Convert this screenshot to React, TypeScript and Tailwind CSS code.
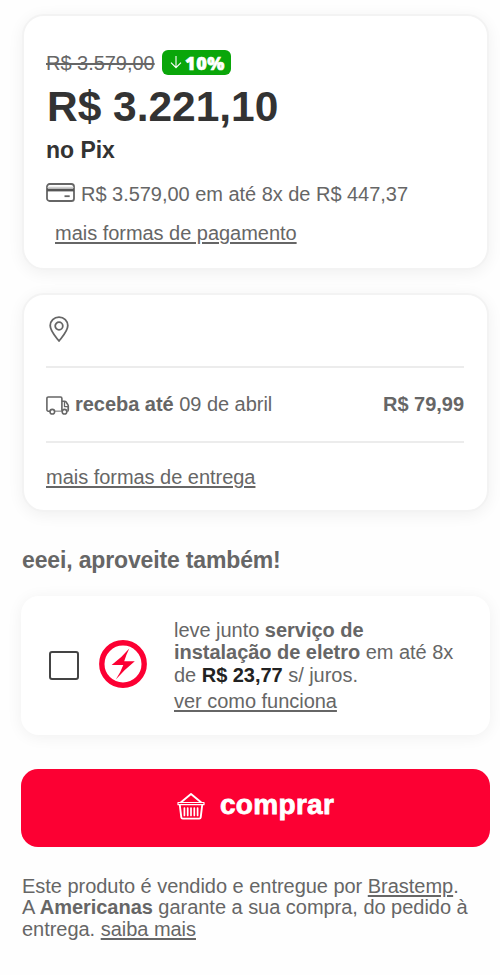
import type { ReactNode } from "react";

function CardIcon() {
  return (
    <svg className="mt-px h-[19px] w-[29px] shrink-0" viewBox="0 0 29 19" fill="none" stroke="#666" strokeWidth="1.8">
      <rect x="1" y="1" width="27" height="17" rx="2.6" />
      <path d="M1 7h27" stroke="#555" strokeWidth="2.8" />
      <path d="M1 4.3h27" stroke="#b5b5b5" strokeWidth="0.8" />
      <path d="M18.5 13.2h5.2" strokeWidth="1.8" />
    </svg>
  );
}

function PinIcon() {
  return (
    <svg className="ml-[3px] h-[27px] w-5" viewBox="0 0 20 27" fill="none" stroke="#666" strokeWidth="1.8" strokeLinejoin="round">
      <path d="M10 1.1C5 1.1 1.2 4.9 1.2 9.6c0 5.6 5 10.6 8.8 15.4 3.8-4.8 8.8-9.8 8.8-15.4C18.8 4.9 15 1.1 10 1.1z" />
      <circle cx="10" cy="10" r="3.8" />
    </svg>
  );
}

function TruckIcon() {
  return (
    <svg className="mt-[4px] h-[19px] w-6 shrink-0" viewBox="0 0 24 19" fill="none" stroke="#666" strokeWidth="1.6" strokeLinejoin="round">
      <path d="M4 15.200H2.300c-.8 0-1.400-.6-1.400-1.400V2.400C.9 1.600 1.500 1 2.300 1h12.200c.8 0 1.400.6 1.400 1.400v12.800" />
      <path d="M8.500 15.200h7.400" stroke="#999" strokeWidth="1.400" />
      <path d="M15.900 5.200h2.800c.5 0 .9.200 1.200.6l2 3c.3.4.4.700.4 1.200v3.800c0 .8-.4 1.400-1.100 1.400" />
      <path d="M18.500 6v4.600h3.800V14" strokeWidth="1.300" />
      <circle cx="6.300" cy="15.700" r="2.300" fill="#fff" />
      <circle cx="18.500" cy="15.700" r="2.300" fill="#fff" />
    </svg>
  );
}

function BoltIcon() {
  return (
    <svg className="h-12 w-12 shrink-0" viewBox="0 0 48 48">
      <circle cx="24" cy="24" r="21.200" fill="none" stroke="#fc0033" strokeWidth="5.400" />
      <path d="M30.300 8.500Q22.500 17.800 12.600 25H24.300Q21.800 32 16.800 39.600 25.500 29.500 35.800 21.300H25.200Q26.800 15.500 30.300 8.500z" fill="#fc0033" />
    </svg>
  );
}

function BasketIcon() {
  return (
    <svg className="h-[28px] w-[28px] shrink-0" viewBox="0 0 28 28" fill="none" stroke="#fff" strokeWidth="1.900" strokeLinejoin="round" strokeLinecap="round">
      <path d="M1 10.500h26v2.200H1z" strokeWidth="1.200" />
      <path d="M4 10.200 14 2l10 8.200" />
      <path d="m2.800 13 1.500 12.300c.1.800.6 1.300 1.400 1.300h16.600c.8 0 1.300-.5 1.400-1.300L25.200 13" />
      <path d="M7.400 16v7.500M10.700 16v7.500M14 16v7.500M17.300 16v7.500M20.600 16v7.500" strokeWidth="1.700" />
    </svg>
  );
}

function Card({ className, children }: { className: string; children: ReactNode }) {
  return (
    <section className={`ml-[22px] w-[467px] rounded-[22px] border-2 border-[#f3f3f3] bg-white px-[22px] shadow-[0_3px_16px_rgba(0,0,0,0.06)] ${className}`}>
      {children}
    </section>
  );
}

const link = "underline decoration-[1.5px] underline-offset-[2px]";

export default function App() {
  return (
    <main className="flex h-[975px] w-[500px] flex-col overflow-hidden bg-[#fefefe] font-['Liberation_Sans',Arial,sans-serif] text-[20px] leading-6 tracking-[-0.03px] whitespace-nowrap text-[#666]">
      <Card className="mt-[14px] h-[256px] pt-[34px]">
        <div className="flex h-[25px]">
          <span className="w-[116px] pt-px line-through decoration-[1.5px]">R$ 3.579,00</span>
          <span className="flex h-[25px] w-[69px] items-center rounded-[6px] bg-[#0aa60a] pl-2 text-white">
            <svg className="h-[13px] w-3 shrink-0" viewBox="0 0 12 13" fill="none" stroke="#fff" strokeWidth="1.100">
              <path d="M6 0v11.500M1 6.700l5 5 5-5" />
            </svg>
            <b className="ml-[3px] font-['Open_Sans',sans-serif] text-[18px] font-extrabold tracking-[0.6px] [-webkit-text-stroke:0.6px_white]">10%</b>
          </span>
        </div>
        <p className="mt-[10px] ml-px text-[42.500px] leading-[44px] font-bold text-[#333]">R$ 3.221,10</p>
        <p className="mt-[7px] text-[23px] leading-7 font-bold text-[#333]">no Pix</p>
        <div className="mt-[18px] flex">
          <CardIcon />
          <span className="ml-[6px]">R$ 3.579,00 em até 8x de R$ 447,37</span>
        </div>
        <p className="mt-[15px] ml-[9px]"><a className={link}>mais formas de pagamento</a></p>
      </Card>

      <Card className="mt-[23px] h-[219px] pt-[21px]">
        <PinIcon />
        <div className="mt-[23px] mr-px flex h-[77px] justify-between border-y-2 border-[#ececec] pt-6">
          <span className="flex">
            <TruckIcon />
            <span className="ml-[5px]"><b>receba até</b> 09 de abril</span>
          </span>
          <b>R$ 79,99</b>
        </div>
        <p className="mt-[22px]"><a className={link}>mais formas de entrega</a></p>
      </Card>

      <h2 className="mt-[34px] ml-[22px] text-[23px] leading-7 font-bold tracking-[-0.15px]">eeei, aproveite também!</h2>

      <section className="mt-[22px] ml-[21px] flex h-[139px] w-[469px] rounded-[18px] bg-white shadow-[0_2px_16px_rgba(0,0,0,0.06)]">
        <span className="mt-[55px] ml-[28px] h-[29px] w-[30px] shrink-0 rounded-[3px] border-2 border-[#444]" />
        <span className="mt-[44px] ml-[20px]"><BoltIcon /></span>
        <div className="mt-[23px] ml-[27px] leading-[22.300px]">
          <p>leve junto <b>serviço de</b></p>
          <p><b>instalação de eletro</b> em até 8x</p>
          <p>de <b className="text-[#222]">R$ 23,77</b> s/ juros.</p>
          <p className="mt-1"><a className={link}>ver como funciona</a></p>
        </div>
      </section>

      <button className="mt-[34px] ml-[21px] flex h-[78px] w-[469px] rounded-[17px] bg-[#fc0033] pt-[23px] pl-[156px] text-white">
        <BasketIcon />
        <b className="ml-[15px] text-[28px] leading-[26px] tracking-[0.300px] [-webkit-text-stroke:0.8px_white]">comprar</b>
      </button>

      <footer className="mt-[29px] ml-[22px] leading-[21.300px]">
        <p>Este produto é vendido e entregue por <a className={link}>Brastemp</a>.</p>
        <p>A <b>Americanas</b> garante a sua compra, do pedido à</p>
        <p>entrega. <a className={link}>saiba mais</a></p>
      </footer>
    </main>
  );
}
